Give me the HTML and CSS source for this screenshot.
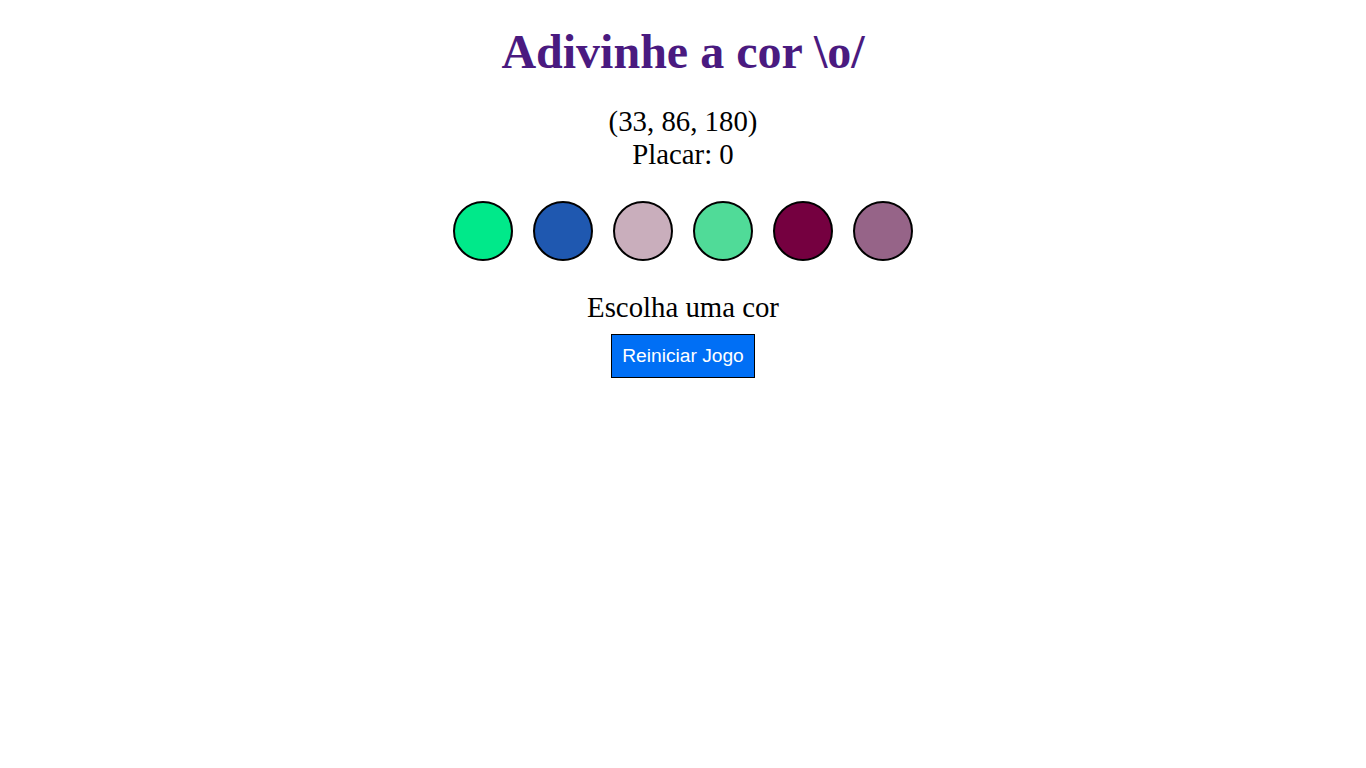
FILE: index.html
```html
<!DOCTYPE html>
<html lang="pt">
<head>
<meta charset="utf-8">
<title>Adivinhe a cor</title>
<link rel="stylesheet" href="styles.css">
</head>
<body>
<main class="game">
  <h1 class="title">Adivinhe a cor \o/</h1>
  <div class="info">
    <p class="rgb">(33, 86, 180)</p>
    <p class="score">Placar: 0</p>
  </div>
  <div class="balls">
    <div class="ball c1"></div>
    <div class="ball c2"></div>
    <div class="ball c3"></div>
    <div class="ball c4"></div>
    <div class="ball c5"></div>
    <div class="ball c6"></div>
  </div>
  <p class="answer">Escolha uma cor</p>
  <button class="reset">Reiniciar Jogo</button>
</main>
</body>
</html>
```
FILE: styles.css
```css
html, body {
  margin: 0;
  padding: 0;
  background: #fff;
}
body {
  font-family: "Liberation Serif", "Times New Roman", serif;
  color: #000;
}
.game {
  display: flex;
  flex-direction: column;
  align-items: center;
  text-align: center;
}
.title {
  margin: 24px 0 0;
  font-size: 48px;
  font-weight: bold;
  color: #4a1a80;
  line-height: 55px;
}
.info {
  margin-top: 26px;
}
.info p {
  margin: 0;
  font-size: 28.8px;
  line-height: 33px;
}
.balls {
  display: flex;
  gap: 20px;
  margin-top: 30px;
}
.ball {
  width: 56px;
  height: 56px;
  border: 2px solid #000;
  border-radius: 50%;
}
.c1 { background: #00e98a; }
.c2 { background: #1f58b0; }
.c3 { background: #c9aebc; }
.c4 { background: #50db98; }
.c5 { background: #750040; }
.c6 { background: #966488; }
.answer {
  margin: 30px 0 0;
  font-size: 28.8px;
  line-height: 33px;
}
.reset {
  margin-top: 10px;
  width: 144px;
  height: 44px;
  padding: 0;
  background: #006ff5;
  color: #fff;
  border: 1px solid #000;
  font-family: "Liberation Sans", Arial, sans-serif;
  font-size: 19.2px;
}
```
